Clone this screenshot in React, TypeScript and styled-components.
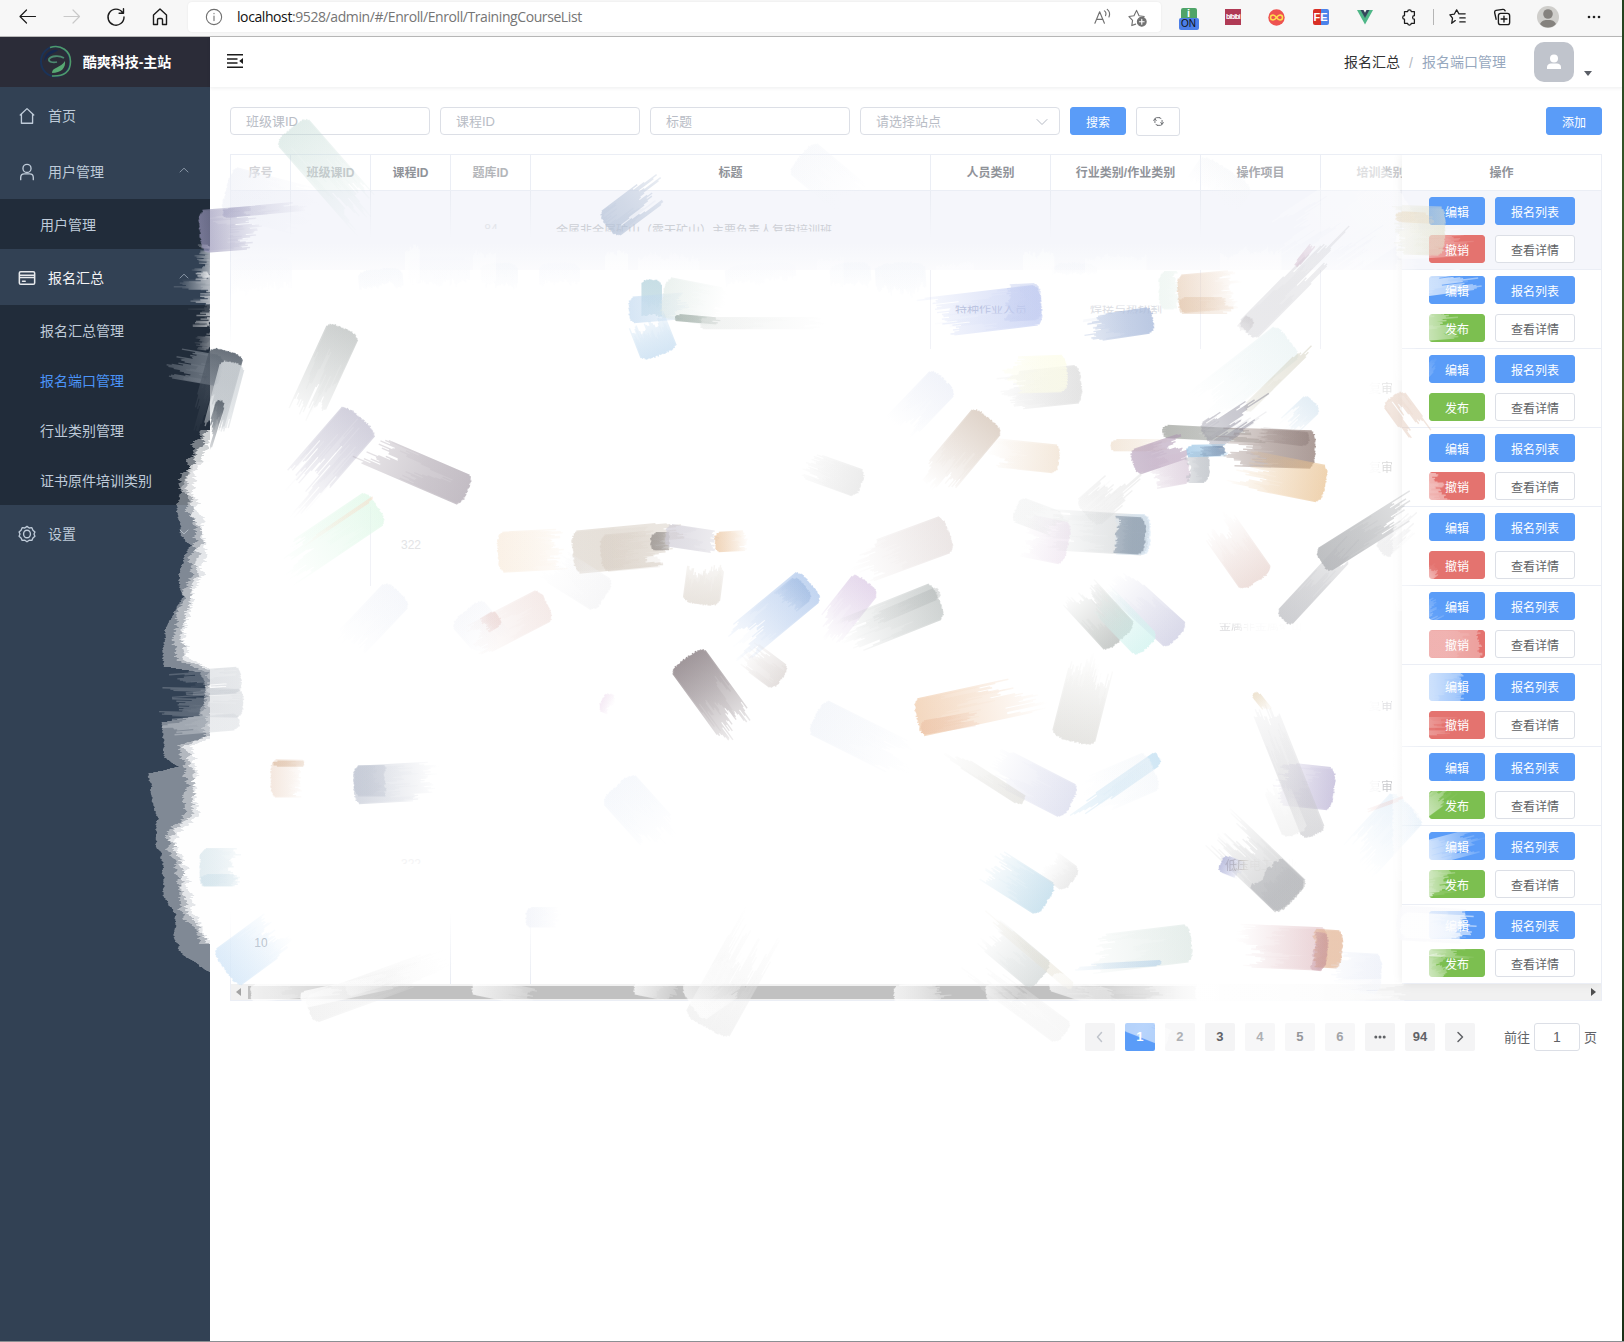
import React from "react";
import styled, { createGlobalStyle, css } from "styled-components";

const GlobalStyle = createGlobalStyle`
  * { box-sizing: border-box; }
  body { margin: 0; background: #fff; overflow: hidden; }
  body, button, input {
    font-family: "Liberation Sans", "Noto Sans CJK SC", sans-serif;
  }
`;

const Window = styled.div`
  width: 1624px;
  height: 1342px;
  display: flex;
  flex-direction: column;
  position: relative;
  overflow: hidden;
  background: #fff;
  border-bottom: 1px solid #8b8f93;
`;

const DesktopEdge = styled.div`
  position: absolute;
  top: 0;
  right: 0;
  width: 2px;
  height: 1342px;
  background: linear-gradient(#24411f, #3b5a2b 15%, #4d5a2a 30%, #14220f 50%, #26401f 70%, #1b3017);
`;

/* ---------- browser bar ---------- */

const BrowserBar = styled.header`
  height: 37px;
  flex: none;
  display: flex;
  align-items: flex-start;
  background: #f7f7f7;
  border-bottom: 1px solid #b9b9b9;
  padding-top: 2px;
`;

const NavButtons = styled.div`
  width: 188px;
  height: 30px;
  display: flex;
  align-items: center;
  padding-left: 18px;
  gap: 24px;
`;

const AddressBar = styled.div`
  width: 973px;
  height: 30px;
  display: flex;
  align-items: center;
  background: #fff;
  border-radius: 4px;
  box-shadow: 0 0 2px rgba(0, 0, 0, 0.08);
  padding: 0 14px 0 17px;
`;

const Url = styled.span`
  flex: 1;
  margin-left: 14px;
  padding-bottom: 1px;
  font: 14px "Open Sans", "Noto Sans", sans-serif;
  letter-spacing: -0.41px;
  color: #757575;
  b { font-weight: 400; color: #111; }
`;

const AddressTools = styled.div`
  display: flex;
  gap: 16px;
  align-items: center;
`;

const Extensions = styled.div`
  height: 30px;
  display: flex;
  align-items: center;
`;

const Slot = styled.div<{ $w: number }>`
  width: ${(p) => p.$w}px;
  height: 30px;
  display: flex;
  align-items: center;
  justify-content: center;
`;

const OnTile = styled.div`
  width: 20px;
  display: flex;
  flex-direction: column;
  align-items: center;
  margin-top: 4px;
`;
const OnTop = styled.div`
  width: 16px;
  height: 10px;
  border-radius: 2px 2px 0 0;
  background: #4fa468;
  color: #fff;
  font: bold 11px/11px "Liberation Sans", sans-serif;
  text-align: center;
`;
const OnLabel = styled.div`
  width: 20px;
  height: 12px;
  border-radius: 2px;
  background: #4b7ee8;
  color: #111;
  font: 10px/12px "Liberation Sans", sans-serif;
  text-align: center;
`;
const RedTile = styled.div`
  width: 16px;
  height: 16px;
  background: #b03a55;
  color: #fff;
  font: bold 7px/15px "Liberation Sans", sans-serif;
  letter-spacing: -0.8px;
  text-align: center;
`;
const FeTile = styled.div`
  width: 16px;
  height: 16px;
  border-radius: 2px;
  background: linear-gradient(90deg, #d92f25 50%, #4c83ea 50%);
  color: #fff;
  font: bold 11px/16px "Liberation Sans", sans-serif;
  text-align: center;
`;
const Divider = styled.div`
  width: 1px;
  height: 16px;
  background: #b5b5b5;
`;

/* ---------- app shell ---------- */

const Shell = styled.div`
  flex: 1;
  display: flex;
  min-height: 0;
`;

const Sidebar = styled.nav`
  width: 210px;
  flex: none;
  background: #324154;
`;

const Brand = styled.div`
  height: 50px;
  display: flex;
  align-items: center;
  justify-content: center;
  gap: 11px;
  padding-bottom: 2px;
  background: #2b2c38;
  color: #fff;
  font-size: 14px;
  font-weight: 700;
`;

const MenuItem = styled.div<{ $open?: boolean }>`
  height: 56px;
  display: flex;
  align-items: center;
  padding: 2px 20px 0 18px;
  font-size: 14px;
  color: ${(p) => (p.$open ? "#f4f4f5" : "#bfcbd9")};
  span { flex: 1; margin-left: 12px; padding-bottom: 3px; }
`;

const MenuArrow = styled.div`
  display: flex;
  padding-bottom: 5px;
`;

const SubMenu = styled.div`
  background: #212c3a;
`;

const SubItem = styled.div<{ $active?: boolean }>`
  height: 50px;
  padding: 2px 0 0 40px;
  line-height: 48px;
  font-size: 14px;
  color: ${(p) => (p.$active ? "#4b94f8" : "#bfcbd9")};
`;

const Main = styled.main`
  flex: 1;
  min-width: 0;
  display: flex;
  flex-direction: column;
`;

const Navbar = styled.div`
  height: 50px;
  flex: none;
  display: flex;
  align-items: center;
  padding: 0 32px 2px 17px;
  box-shadow: 0 1px 4px rgba(0, 21, 41, 0.08);
`;

const Crumbs = styled.div`
  margin-left: auto;
  display: flex;
  align-items: center;
  font-size: 14px;
  line-height: 20px;
  padding-top: 1px;
  color: #97a8be;
  b { font-weight: 400; color: #303133; }
  i { font-style: normal; color: #b4b8c0; width: 22px; text-align: center; padding-top: 2px; }
`;

const Avatar = styled.div`
  width: 40px;
  height: 40px;
  margin: 2px 10px 0 28px;
  border-radius: 10px;
  background: #c0c4cc;
  display: flex;
  align-items: center;
  justify-content: center;
`;

const Caret = styled.div`
  margin-top: 24px;
  border: 4px solid transparent;
  border-top: 5px solid #5a5e66;
  border-bottom: 0;
`;

const Content = styled.section`
  padding: 20px 22px 0 20px;
  display: flex;
  flex-direction: column;
`;

const Filters = styled.div`
  display: flex;
  gap: 10px;
  height: 29px;
  align-items: flex-start;
`;

const Field = styled.div`
  width: 200px;
  height: 28px;
  display: flex;
  align-items: center;
  justify-content: space-between;
  border: 1px solid #dcdfe6;
  border-radius: 4px;
  padding: 1px 11px 0 15px;
  font-size: 13px;
  line-height: 20px;
  color: #b9bdc6;
`;

type Tone = "primary" | "danger" | "success" | "plain";
const tones: Record<Tone, string> = {
  primary: "#5a9cf8",
  danger: "#e4736f",
  success: "#7cbf50",
  plain: "#fff",
};

const Button = styled.button<{ $tone: Tone; $w: number; $h?: number }>`
  width: ${(p) => p.$w}px;
  height: ${(p) => p.$h ?? 28}px;
  flex: none;
  display: flex;
  align-items: center;
  justify-content: center;
  padding: 0;
  border: 1px solid ${(p) => (p.$tone === "plain" ? "#dcdfe6" : tones[p.$tone])};
  border-radius: 3px;
  background: ${(p) => tones[p.$tone]};
  color: ${(p) => (p.$tone === "plain" ? "#606266" : "#fff")};
  font-size: 12px;
`;

const Spacer = styled.div`
  flex: 1;
`;

/* ---------- table ---------- */

const TableFrame = styled.div`
  margin-top: 18px;
  width: 1372px;
  border: 1px solid #ebeef5;
  display: grid;
  grid-template-columns: 1171px 199px;
`;

const Scrolling = styled.div`
  overflow: hidden;
`;

const Fixed = styled.div`
  background: #fff;
  box-shadow: 0 0 10px rgba(0, 0, 0, 0.08);
  clip-path: inset(0 0 -12px -12px);
`;

const columns = "60px 80px 80px 80px 400px 120px 150px 120px 120px";

const HeadRow = styled.div`
  width: 1210px;
  display: grid;
  grid-template-columns: ${columns};
  height: 36px;
  border-bottom: 1px solid #ebeef5;
`;

const HeadCell = styled.div<{ $ink?: string }>`
  display: flex;
  align-items: center;
  justify-content: center;
  padding-bottom: 2px;
  border-right: 1px solid #ebeef5;
  font-size: 12px;
  font-weight: 700;
  color: ${(p) => p.$ink ?? "#909399"};
`;

const BodyRow = styled.div<{ $h: number; $hover?: boolean }>`
  width: 1210px;
  height: ${(p) => p.$h}px;
  display: grid;
  grid-template-columns: ${columns};
  ${(p) =>
    p.$hover &&
    css`
      background: linear-gradient(#f5f6fb 65%, #f8f9fc 85%, #fbfbfd);
    `}
`;

const BodyCell = styled.div<{ $ink?: string; $line?: string; $shift?: number }>`
  display: flex;
  align-items: center;
  justify-content: center;
  padding-right: ${(p) => p.$shift ?? 0}px;
  padding-bottom: 3px;
  font-size: 12px;
  white-space: nowrap;
  color: ${(p) => p.$ink ?? "#e6e7ea"};
  background: ${(p) => p.$line ?? "none"} right / 1px 100% no-repeat;
`;

const CellText = styled.span<{ $top?: number; $bottom?: number; $fade?: boolean; $tail?: boolean }>`
  clip-path: inset(${(p) => p.$top ?? 0}px 0 ${(p) => p.$bottom ?? 0}px 0);
  ${(p) => p.$fade && css`mask-image: linear-gradient(90deg, #000 16%, rgba(0, 0, 0, 0.15) 34%, rgba(0, 0, 0, 0.02));`}
  ${(p) => p.$tail && css`mask-image: linear-gradient(90deg, rgba(0, 0, 0, 0.1) 35%, #000 60%);`}
`;

const ActionHead = styled(HeadCell)`
  height: 36px;
  border-right: 0;
  border-bottom: 1px solid #ebeef5;
`;

const ActionCell = styled.div<{ $h: number; $hover?: boolean }>`
  height: ${(p) => p.$h}px;
  padding-left: 27px;
  display: grid;
  grid-template-columns: 56px 80px;
  gap: 10px;
  align-content: center;
  border-bottom: 1px solid #ebeef5;
  background: ${(p) => (p.$hover ? "#f5f6fb" : "#fff")};
`;

const ScrollTrack = styled.div`
  grid-column: 1 / 3;
  height: 16px;
  display: flex;
  align-items: center;
  padding: 0 5px 0 5px;
  background: #f1f1f1;
`;

const ScrollThumb = styled.div`
  width: 958px;
  height: 13px;
  margin-left: 7px;
  margin-right: auto;
  background: #c1c1c1;
`;

const ArrowTip = styled.div<{ $dir: "left" | "right" }>`
  border: 4px solid transparent;
  ${(p) =>
    p.$dir === "left"
      ? css`border-left: 0; border-right: 5px solid #a3a3a3;`
      : css`border-right: 0; border-left: 5px solid #505050;`}
`;

/* ---------- pagination ---------- */

const Pager = styled.div`
  margin-top: 22px;
  display: flex;
  justify-content: flex-end;
  gap: 10px;
  padding-right: 5px;
  font-size: 13px;
  color: #606266;
`;

const Page = styled.div<{ $on?: boolean; $ink?: string }>`
  width: 30px;
  height: 28px;
  display: flex;
  align-items: center;
  justify-content: center;
  padding-bottom: 1px;
  border-radius: 2px;
  background: ${(p) => (p.$on ? "#5a9cf8" : p.$ink ? "#f7f7f8" : "#f4f4f5")};
  color: ${(p) => (p.$on ? "#fff" : p.$ink ?? "#606266")};
  font-weight: 700;
`;

const Jump = styled.div`
  height: 28px;
  display: flex;
  align-items: center;
  gap: 4px;
  margin-left: 19px;
  line-height: 27px;
`;

const JumpBox = styled.div`
  width: 46px;
  height: 28px;
  border: 1px solid #dcdfe6;
  border-radius: 3px;
  text-align: center;
  font-size: 14px;
`;

/* ---------- brush marks ---------- */

const Canvas = styled.svg`
  position: absolute;
  top: 0;
  left: 0;
  pointer-events: none;
`;

function random(seed: number) {
  let s = (seed * 2654435761) % 4294967296;
  return () => {
    s = (s * 1664525 + 1013904223) % 4294967296;
    return s / 4294967296;
  };
}

/* from x,y / to x,y / width / colour / opacity at start / opacity at end / raggedness of the tail */
type Mark = [number, number, number, number, number, string, number, number, number?];

function bristles(rnd: () => number, width: number, len: number, rag: number) {
  const step = 1.2;
  let d = "";
  let drift = 0;
  for (let t = -width / 2; t < width / 2; t += step) {
    const edge = Math.abs(t) / (width / 2);
    drift = drift * 0.8 + (rnd() - 0.5) * 0.6;
    const s = Math.pow(edge, 5) * 5 + rnd() * 1.8;
    const e = Math.max(s + 2, len * (1 - rag * (0.3 + drift + rnd() * 0.45)));
    d += `M${s.toFixed(1)} ${t.toFixed(1)}H${e.toFixed(1)}v${step + 0.2}H${s.toFixed(1)}z`;
  }
  return d;
}

function BrushMark({ mark, index }: { mark: Mark; index: number }) {
  const [x1, y1, x2, y2, width, color, a, b, rag = 0.3] = mark;
  const len = Math.hypot(x2 - x1, y2 - y1);
  const angle = (Math.atan2(y2 - y1, x2 - x1) * 180) / Math.PI;
  const rnd = random(index + 7);
  const id = `brush${index}`;
  return (
    <g transform={`translate(${x1} ${y1}) rotate(${angle.toFixed(1)})`}>
      <linearGradient id={id} gradientUnits="userSpaceOnUse" x1="0" y1="0" x2={len} y2="0">
        <stop offset="0" stopColor={color} stopOpacity={a} />
        <stop offset="0.4" stopColor={color} stopOpacity={a * 0.6 + b * 0.4} />
        <stop offset="1" stopColor={color} stopOpacity={b * 0.8} />
      </linearGradient>
      <path d={bristles(rnd, width, len, rag)} fill={`url(#${id})`} fillOpacity="0.8" />
      <path d={bristles(rnd, width * 0.94, len * 0.8, rag + 0.25)} fill={`url(#${id})`} fillOpacity="0.2" />
    </g>
  );
}

const W = "#ffffff";
const marks: Mark[] = [
  // header and first row
  [290, 128, 375, 225, 40, "#bfd8d2", 0.5, 0, 0.4],
  [225, 190, 320, 215, 50, "#eef0f7", 0.7, 0],
  [800, 155, 860, 205, 40, "#f3f5f9", 0.6, 0],
  [1230, 170, 1210, 200, 60, "#f3f5f8", 0.5, 0],
  [606, 226, 662, 184, 30, "#b6c3d8", 0.85, 0.5, 0.7],
  [1400, 190, 1290, 262, 90, W, 0.5, 0.3, 0.5],
  [199, 231, 262, 226, 42, "#9592b6", 0.85, 0.1, 0.4],
  [222, 213, 310, 205, 9, "#a7a5c4", 0.6, 0, 0.5],
  [262, 256, 262, 292, 60, "#f7f8fc", 0.8, 0.2],
  [380, 268, 382, 290, 44, "#f5f7fb", 0.8, 0.4],
  [440, 255, 440, 288, 60, "#f7f8fc", 0.8, 0.3],
  [500, 262, 500, 290, 36, "#f5f7fb", 0.8, 0.3],
  [560, 262, 560, 288, 40, "#f7f8fc", 0.8, 0.2],
  [760, 262, 762, 284, 70, "#f8f9fc", 0.8, 0.3],
  [850, 262, 852, 288, 40, "#f5f7fb", 0.8, 0.3],
  [900, 262, 902, 296, 50, "#f5f7fb", 0.9, 0.3],
  [1075, 262, 1075, 276, 44, "#f5f7fb", 0.8, 0.3],
  [412, 285, 412, 246, 14, W, 0.9, 0.5, 0.2],
  [484, 285, 484, 250, 22, W, 0.8, 0.4, 0.2],
  [616, 288, 616, 250, 22, W, 0.9, 0.6, 0.2],
  [668, 290, 668, 252, 60, W, 0.8, 0.3, 0.2],
  [830, 290, 830, 256, 26, W, 0.7, 0.3, 0.2],
  [954, 290, 954, 262, 36, W, 0.8, 0.4, 0.2],
  [1038, 285, 1038, 250, 30, W, 0.95, 0.6, 0.2],
  [1115, 285, 1115, 254, 60, W, 0.8, 0.4, 0.2],
  [1250, 285, 1250, 248, 60, W, 0.9, 0.4, 0.2],
  // left column
  [345, 328, 298, 430, 34, "#b3b8b7", 0.75, 0, 0.4],
  [362, 418, 282, 510, 44, "#9c98b4", 0.5, 0, 0.6],
  [468, 492, 366, 448, 32, "#9e94a0", 0.7, 0.4, 0.3],
  [378, 506, 280, 572, 38, "#e0f8e8", 0.9, 0, 0.4],
  [374, 498, 300, 548, 3, "#f8dcc8", 0.6, 0],
  [400, 592, 345, 650, 34, "#f3f5fa", 0.9, 0],
  [465, 610, 500, 650, 40, "#f5f6fa", 0.8, 0],
  [548, 604, 474, 642, 34, "#ecd9d5", 0.6, 0.1],
  [500, 617, 483, 627, 16, "#e8cdca", 0.6, 0.4],
  [270, 778, 308, 778, 38, "#f0dfd3", 0.85, 0],
  [272, 763, 305, 763, 5, "#dfc2aa", 0.9, 0.6, 0.1],
  [353, 785, 440, 780, 38, "#bcc2d0", 0.7, 0],
  [353, 780, 386, 780, 30, "#b5bccb", 0.5, 0.5, 0.1],
  [199, 867, 242, 867, 38, "#d8e6ec", 0.85, 0.3],
  [200, 880, 238, 880, 12, "#cbdfe9", 0.6, 0.4],
  [224, 970, 284, 926, 44, "#cfe4f7", 0.85, 0],
  [525, 917, 562, 917, 20, "#f1f3f9", 0.9, 0],
  [308, 1010, 440, 962, 28, "#eaeaea", 0.65, 0.05],
  [345, 990, 430, 965, 14, "#f0f0f0", 0.5, 0],
  // upper middle
  [652, 279, 652, 318, 20, "#b3d2dc", 0.85, 0.7, 0.1],
  [628, 310, 690, 305, 26, "#c0d8ef", 0.75, 0.2],
  [662, 296, 725, 308, 40, "#dfe9e5", 0.7, 0],
  [674, 317, 720, 321, 7, "#8f9f97", 0.7, 0.5],
  [660, 356, 645, 318, 38, "#bdd8ef", 0.75, 0.3],
  [700, 323, 830, 323, 12, "#e3e6e4", 0.6, 0],
  [1042, 305, 914, 320, 40, "#c0cbf2", 0.85, 0.1, 0.4],
  [1042, 302, 1003, 304, 36, "#c0caef", 0.6, 0.6, 0.2],
  [1154, 320, 1086, 330, 26, "#a6b8da", 0.9, 0.5],
  [1158, 290, 1182, 290, 38, "#edf5f1", 0.9, 0.7],
  [1177, 294, 1244, 288, 38, "#e6cbb3", 0.7, 0],
  [1178, 305, 1234, 305, 16, "#dfc0a4", 0.5, 0.3],
  [1245, 332, 1336, 240, 24, "#cbcbd1", 0.45, 0.5, 0.7],
  [1295, 266, 1316, 240, 5, "#d5bfd0", 0.6, 0.5],
  [1252, 318, 1240, 332, 12, "#c0bcc0", 0.5, 0.2],
  [1082, 384, 1006, 392, 38, "#d6d6d6", 0.75, 0.2],
  [1068, 374, 1005, 376, 36, "#fcfce9", 0.95, 0.5],
  [946, 380, 898, 430, 34, "#edf0f8", 0.9, 0],
  [990, 418, 930, 490, 38, "#cfbdae", 0.75, 0],
  [1060, 460, 985, 452, 28, "#eeddca", 0.75, 0],
  [862, 485, 792, 460, 28, "#e0e0e0", 0.7, 0, 0.4],
  // right middle
  [1290, 340, 1200, 410, 40, "#e4f0f1", 0.65, 0],
  [1245, 410, 1318, 338, 9, "#c8c4ae", 0.2, 0.7, 0.5],
  [1315, 402, 1275, 440, 22, "#cfe1ee", 0.65, 0, 0.6],
  [1162, 431, 1260, 436, 13, "#a1a49f", 0.9, 0.5],
  [1316, 450, 1218, 447, 38, "#8e7872", 0.85, 0.4],
  [1310, 440, 1250, 433, 14, "#705c5a", 0.3, 0.1],
  [1326, 485, 1225, 465, 38, "#e8c08e", 0.8, 0, 0.35],
  [1205, 438, 1266, 398, 30, "#8c8b9b", 0.4, 0.8, 0.8],
  [1110, 445, 1175, 445, 12, "#f0e2d2", 0.9, 0.2],
  [1132, 463, 1188, 444, 26, "#a98fae", 0.6, 0.8],
  [1190, 468, 1150, 475, 30, "#d2c0d2", 0.7, 0.3],
  [1210, 468, 1186, 468, 30, "#b3b8bf", 0.8, 0.6],
  [1186, 451, 1230, 450, 12, "#a0c8e6", 0.9, 0.6],
  [1226, 451, 1200, 452, 9, "#6d86a6", 0.8, 0.4],
  [1085, 515, 1130, 476, 34, "#d9d9d9", 0.2, 0.6, 0.9],
  [1392, 396, 1420, 434, 26, "#e1c5b4", 0.5, 0.7, 0.8],
  [1149, 536, 1048, 530, 40, "#c8ccce", 0.75, 0.1],
  [1151, 535, 1115, 535, 40, "#cfe2f3", 0.7, 0.3, 0.1],
  [1146, 537, 1113, 535, 36, "#8f9eae", 0.95, 0.95, 0.15],
  [1069, 545, 1020, 535, 42, "#e8dbea", 0.6, 0],
  [1015, 508, 1060, 525, 26, "#e2e4e4", 0.3, 0.4],
  [1258, 582, 1218, 525, 38, "#e5cfc9", 0.75, 0.05],
  [1320, 562, 1428, 494, 26, "#aeb0b3", 0.95, 0.45, 0.4],
  [1380, 552, 1424, 512, 20, "#cfcfd2", 0.3, 0.4, 0.8],
  [1282, 620, 1362, 534, 20, "#b4b5ba", 0.75, 0.3, 0.4],
  [1122, 640, 1074, 588, 40, "#b0b5b2", 0.8, 0],
  [1178, 638, 1112, 578, 32, "#c9c9e0", 0.8, 0, 0.3],
  [1148, 648, 1098, 596, 30, "#d2f3ef", 0.95, 0],
  [1072, 742, 1094, 656, 44, "#dbdad6", 0.8, 0.05],
  // centre
  [497, 552, 572, 548, 40, "#f8ebdc", 0.8, 0.2],
  [572, 552, 678, 542, 42, "#d3c9bd", 0.6, 0.7],
  [600, 553, 668, 547, 36, "#cfc3b7", 0.4, 0.2],
  [605, 598, 545, 560, 36, "#f0f0f2", 0.6, 0],
  [650, 541, 670, 541, 18, "#8f8986", 0.8, 0.7, 0.1],
  [665, 534, 724, 543, 22, "#cfccd6", 0.8, 0.5],
  [714, 542, 750, 540, 20, "#ecc9a6", 0.95, 0],
  [700, 605, 706, 560, 36, "#dfd8d0", 0.8, 0.3],
  [950, 533, 850, 570, 38, "#e3dbda", 0.8, 0],
  [812, 584, 725, 656, 38, "#b4cbed", 0.95, 0],
  [806, 586, 784, 604, 28, "#88a9d8", 0.45, 0.15, 0.3],
  [868, 582, 822, 640, 32, "#dac8e4", 0.8, 0],
  [940, 600, 840, 640, 38, "#b6bcbb", 0.75, 0],
  [940, 592, 870, 622, 12, "#a8adad", 0.4, 0.1],
  [686, 657, 742, 734, 40, "#83777c", 0.9, 0.2, 0.35],
  [782, 680, 742, 650, 28, "#cdc4c1", 0.6, 0, 0.7],
  [815, 715, 915, 765, 38, "#f1f4f9", 0.85, 0],
  [916, 718, 1045, 690, 38, "#efc9a8", 0.85, 0, 0.5],
  [920, 728, 990, 716, 14, "#e9b99c", 0.5, 0.2],
  [1072, 804, 990, 762, 36, "#d8daec", 0.85, 0],
  [1024, 802, 940, 748, 12, "#dcdbd6", 0.7, 0],
  [1160, 757, 1062, 825, 14, "#bcdcf0", 0.8, 0.25, 0.5],
  [1155, 770, 1085, 800, 40, "#f1f5f9", 0.6, 0],
  [601, 700, 614, 706, 20, "#eedcee", 0.7, 0],
  [616, 785, 670, 845, 42, "#f3f6fb", 0.9, 0],
  // lower right
  [1335, 790, 1280, 784, 42, "#b8b0d3", 0.8, 0.2],
  [1314, 836, 1262, 705, 24, "#c6c6ca", 0.7, 0.15, 0.2],
  [1296, 835, 1275, 785, 26, "#eeeeee", 0.8, 0.2],
  [1254, 692, 1270, 712, 8, "#e6d6bb", 0.8, 0.1],
  [1294, 900, 1212, 822, 44, "#b9babc", 0.75, 0, 0.4],
  [1293, 900, 1264, 872, 42, "#a9abb0", 0.5, 0.7, 0.1],
  [1220, 862, 1245, 872, 18, "#a8acd6", 0.85, 0],
  [1410, 805, 1355, 865, 44, "#ddebf7", 0.65, 0, 0.4],
  [1404, 798, 1365, 812, 3, "#edcfcd", 0.6, 0.2],
  [1048, 902, 985, 862, 36, "#a8cfe3", 0.65, 0.05],
  [1073, 882, 1046, 862, 28, "#dadada", 0.6, 0],
  [1192, 943, 1085, 956, 38, "#d9e5e1", 0.75, 0.1],
  [1162, 963, 1070, 968, 6, "#b9d4ea", 0.8, 0.1],
  [1328, 950, 1235, 946, 42, "#d6a8af", 0.6, 0],
  [1343, 950, 1312, 948, 38, "#e0ad8a", 0.75, 0.75, 0.2],
  [1328, 953, 1312, 951, 38, "#bd8a98", 0.5, 0.5, 0.2],
  [1382, 975, 1330, 972, 40, "#e9edf7", 0.75, 0.3],
  [1042, 978, 985, 930, 34, "#ccd2d2", 0.75, 0],
  [1072, 988, 975, 905, 9, "#e5e0d2", 0.6, 0.1, 0.5],
  [705, 1028, 768, 915, 50, "#ececec", 0.7, 0, 0.5],
  [1065, 1035, 950, 950, 26, "#eeeeee", 0.5, 0.1, 0.6],
  // white scrubs across the scrollbar
  [250, 993, 345, 985, 18, W, 0.9, 0.4],
  [300, 1000, 400, 978, 16, W, 1, 0.3],
  [472, 985, 545, 1000, 18, W, 0.9, 0.2],
  [634, 985, 680, 994, 18, W, 0.9, 0.2],
  [690, 1005, 740, 970, 40, W, 0.8, 0.2],
  [893, 994, 955, 990, 18, W, 0.9, 0.3],
  [985, 992, 1025, 992, 18, W, 0.8, 0],
  [1050, 980, 1120, 1003, 20, W, 0.8, 0.3],
  [1216, 993, 1060, 993, 22, W, 1, 0.1],
  [1210, 993, 1140, 993, 22, W, 1, 0.3],
  [1195, 994, 1420, 990, 24, W, 1, 0.6, 0.2],
  [1195, 994, 1390, 992, 24, W, 1, 0.5, 0.2],
  // scrubs over the action column
  [1392, 560, 1424, 560, 100, W, 0.6, 0],
  [1392, 800, 1424, 800, 160, W, 0.7, 0],
  [1392, 320, 1424, 320, 120, W, 0.6, 0],
  [1395, 245, 1478, 240, 28, W, 0.7, 0.1, 0.6],
  [1446, 232, 1390, 230, 48, "#e2e2cd", 0.7, 0.2],
  [1395, 216, 1436, 218, 10, "#e8d8bd", 0.5, 0.5],
  [1410, 285, 1478, 276, 24, W, 0.9, 0.6, 0.7],
  [1415, 328, 1468, 324, 26, W, 0.9, 0.2, 0.6],
  [1420, 376, 1438, 356, 14, W, 0.3, 0, 0.6],
  [1415, 487, 1446, 487, 28, W, 0.6, 0.6, 0.4],
  [1425, 576, 1440, 564, 14, W, 0.6, 0.1, 0.6],
  [1420, 615, 1450, 600, 22, W, 0.4, 0, 0.8],
  [1422, 644, 1483, 644, 28, W, 0.5, 0.5, 0.1],
  [1412, 690, 1465, 688, 38, W, 0.9, 0.6, 0.12],
  [1415, 726, 1464, 726, 18, W, 0.4, 0, 0.8],
  [1415, 815, 1452, 788, 18, W, 0.8, 0.2, 0.6],
  [1418, 855, 1482, 838, 24, W, 1, 0.1, 0.6],
  [1418, 884, 1458, 880, 26, W, 0.9, 0.3, 0.6],
  [1396, 922, 1466, 926, 34, "#fafafc", 1, 1, 0.1],
  [1400, 924, 1476, 928, 24, W, 0.9, 0.8, 0.3],
  [1420, 948, 1478, 952, 14, W, 0.9, 0, 0.6],
  [1422, 970, 1448, 962, 24, W, 0.8, 0.3, 0.5],
  // pager
  [1124, 1021, 1170, 1039, 18, W, 0.6, 0.7, 0.05],
];

/* x of the painted edge over the menu, sampled down the page */
const washEdge: [number, number][] = [
  [462, 196], [480, 185], [508, 176], [534, 181], [545, 190], [562, 183], [580, 179], [595, 184], [626, 167], [651, 161],
  [666, 166], [672, 200], [690, 206], [715, 200], [722, 161], [757, 165], [766, 178], [773, 149], [807, 153], [816, 157],
  [848, 157], [855, 161], [883, 165], [896, 163], [914, 176], [941, 174], [955, 184], [966, 200], [972, 210],
];
const whiteEdge: [number, number][] = [
  [430, 209], [455, 198], [478, 187], [501, 192], [541, 203], [573, 197], [605, 188], [640, 180], [660, 184], [672, 214], [735, 212],
  [745, 184], [760, 190], [780, 194], [812, 194], [835, 172], [850, 174], [873, 183], [909, 188], [925, 198], [944, 210],
];

function edgeAt(points: [number, number][], y: number) {
  for (let i = 1; i < points.length; i++) {
    const [y0, x0] = points[i - 1];
    const [y1, x1] = points[i];
    if (y <= y1) return x0 + ((x1 - x0) * (y - y0)) / (y1 - y0);
  }
  return points[points.length - 1][1];
}

function edgePath(points: [number, number][], jitter: number, right: number, shift = 0) {
  const rnd = random(points.length * 31 + shift + 40);
  let d = "";
  let drift = 0;
  for (let y = points[0][0]; y < points[points.length - 1][0]; y += 1) {
    drift = drift * 0.75 + (rnd() - 0.5) * jitter * 0.7;
    const x = edgeAt(points, y) + shift + drift;
    if (x < right) d += `M${x.toFixed(1)} ${y}H${right}v1H${x.toFixed(1)}z`;
  }
  return d;
}

function Brushwork() {
  return (
    <Canvas width={1622} height={1100} viewBox="0 0 1622 1100">
      <clipPath id="menuArea"><path d="M0 0H210V1100H0z" /></clipPath>
      <linearGradient id="ruleFade" x1="0" y1="0" x2="0" y2="1">
        <stop offset="0" stopColor="#fff" stopOpacity="0" />
        <stop offset="0.08" stopColor="#fff" />
        <stop offset="0.9" stopColor="#fff" />
        <stop offset="1" stopColor="#fff" stopOpacity="0.3" />
      </linearGradient>
      <path d="M228 290H233V980H228z" fill="url(#ruleFade)" />
      <g clipPath="url(#menuArea)">
        <BrushMark index={900} mark={[213, 263, 190, 262, 34, W, 0.8, 0, 1]} />
        <BrushMark index={901} mark={[213, 300, 184, 300, 54, W, 0.8, 0.2, 1.1]} />
        <BrushMark index={902} mark={[213, 338, 192, 336, 26, W, 0.5, 0, 1.1]} />
      </g>
      <BrushMark index={903} mark={[222, 372, 164, 362, 30, "#a9b1ba", 0.7, 0.4, 0.7]} />
      <BrushMark index={904} mark={[228, 350, 206, 430, 34, "#4b5561", 1, 0.2, 0.4]} />
      <BrushMark index={905} mark={[234, 362, 216, 430, 24, "#d3d8dc", 1, 0.7, 0.3]} />
      <BrushMark index={906} mark={[222, 400, 205, 455, 9, "#39434f", 0.8, 0.2, 0.7]} />
      <path d={edgePath(washEdge, 3, 210)} fill="#ffffff" fillOpacity="0.38" />
      <path d={edgePath(whiteEdge, 7, 210, -7)} fill="#ffffff" fillOpacity="0.4" />
      <path d={edgePath(whiteEdge, 7, 210, -1)} fill="#ffffff" fillOpacity="0.65" />
      <path d={edgePath(whiteEdge, 8, 210, 4)} fill="#ffffff" fillOpacity="0.95" />
      <BrushMark index={907} mark={[242, 680, 158, 686, 26, "#a9b0ba", 0.3, 0.5, 0.7]} />
      <BrushMark index={908} mark={[244, 704, 162, 702, 28, "#b4bac2", 0.35, 0.5, 0.6]} />
      <BrushMark index={909} mark={[240, 722, 168, 728, 16, "#d3d7dc", 0.5, 0.6, 0.4]} />
      {marks.map((m, i) => (
        <BrushMark key={i} mark={m} index={i} />
      ))}
    </Canvas>
  );
}

/* ---------- icons ---------- */

type LineProps = { w?: number; c?: string; sw?: number; vb?: string; children: React.ReactNode };

const Glyph = styled.svg`
  flex: none;
`;

const Line = ({ w = 18, c = "#1b1b1b", sw = 1.2, vb = "0 0 20 20", children }: LineProps) => (
  <Glyph width={w} height={w} viewBox={vb} fill="none" stroke={c} strokeWidth={sw} strokeLinecap="round" strokeLinejoin="round">
    {children}
  </Glyph>
);

const Chevron = ({ d, c, w = 12, sw = 1.2 }: { d: string; c: string; w?: number; sw?: number }) => (
  <Line w={w} c={c} sw={sw} vb="0 0 12 12">
    <path d={d} />
  </Line>
);

const Logo = () => (
  <svg width="33" height="33" viewBox="0 0 33 33" fill="none">
    <ellipse cx="16.500" cy="16.500" rx="14.500" ry="15" stroke="#1b3358" strokeWidth="2" />
    <path d="M11 2.500C22-1 31.500 6 31.500 16.500S25 31.500 13 31" stroke="#4f9a6b" strokeWidth="1.600" />
    <path d="M5 16C6 8 12 4 19 5c-2 3-9 3-12 9" fill="#152850" />
    <path d="M25 13c-5-3-13-2-15 1-1 3 4 4 8 3" stroke="#4c8a70" strokeWidth="1.800" />
    <path d="M26 16c1 7-4 12-13 12 0-6 9-5 13-12z" fill="#57a873" />
  </svg>
);

const rows: { h: number; status: "撤销" | "发布" }[] = [
  { h: 79, status: "撤销" },
  { h: 79, status: "发布" },
  { h: 79, status: "发布" },
  { h: 79, status: "撤销" },
  { h: 79, status: "撤销" },
  { h: 79, status: "撤销" },
  { h: 82, status: "撤销" },
  { h: 79, status: "发布" },
  { h: 79, status: "发布" },
  { h: 79, status: "发布" },
];

const headers: [string, string?][] = [
  ["序号", "#d3d4d8"],
  ["班级课ID", "#c5c7cb"],
  ["课程ID"],
  ["题库ID", "#b4b6ba"],
  ["标题"],
  ["人员类别"],
  ["行业类别/作业类别"],
  ["操作项目", "#a9abb0"],
  ["培训类别", "#c9cacd"],
];

const fadeDown = "linear-gradient(#e9ecf3, transparent 60%)";
const fadeUp = "linear-gradient(transparent 10%, #e9ecf3)";
const hair = "linear-gradient(#f1f2f7, #f1f2f7)";

type CellInfo = {
  text?: string;
  ink?: string;
  line?: string;
  top?: number;
  bottom?: number;
  shift?: number;
  fade?: boolean;
  tail?: boolean;
};

const remnants: Record<string, CellInfo> = {
  "0-3": { text: "84", ink: "#e3e5ea", bottom: 7 },
  "0-4": { text: "金属非金属矿山（露天矿山）主要负责人复审培训班", ink: "#cdd0d6", bottom: 6, shift: 74 },
  "1-5": { text: "特种作业人员", ink: "#b9c0d6", top: 6, bottom: 3 },
  "1-6": { text: "焊接与热切割", ink: "#dcdee4", top: 6, bottom: 3 },
  "2-8": { text: "复审", ink: "#e6e6e6", top: 3, tail: true },
  "3-8": { text: "复审", ink: "#dadada", tail: true },
  "4-2": { text: "322", ink: "#e3e4e6" },
  "5-7": { text: "金属非金属矿山", ink: "#dcdcde", fade: true, top: 8 },
  "6-8": { text: "复审", ink: "#e2e2e5", top: 5, tail: true },
  "7-8": { text: "复审", ink: "#c9cacd", tail: true },
  "8-2": { text: "322", ink: "#f4f4f5", bottom: 7 },
  "8-7": { text: "低压电工作业", ink: "#bdb6ae", fade: true },
  "9-0": { text: "10", ink: "#b4b9c1" },
};

function cellFor(row: number, col: number): CellInfo {
  const info: CellInfo = { ...(remnants[`${row}-${col}`] ?? {}) };
  if (row === 0) info.line = fadeDown;
  if (row === 9 && (col === 2 || col === 3)) info.line = fadeUp;
  if (row === 1 && (col === 4 || col === 7 || col === 6)) info.line = hair;
  if (row === 4 && col === 1) info.line = hair;
  return info;
}

export default function App() {
  return (
    <>
      <GlobalStyle />
      <Window>
        <BrowserBar>
          <NavButtons>
            <Line w={20}><path d="M17.500 9.500H2M8.500 3L2 9.500 8.500 16" /></Line>
            <Line w={20} c="#c9c9c9"><path d="M2 9.500h15.500M11 3l6.500 6.500L11 16" /></Line>
            <Line w={20} sw={1.4}><path d="M16.500 5.500A8 8 0 1 0 18 10M17.500 1.800v4.400h-4.400" /></Line>
            <Line w={20} sw={1.4}><path d="M3.500 8L10 2l6.500 6v9.500h-4v-4.700a1.300 1.300 0 0 0-1.300-1.300H8.800a1.300 1.300 0 0 0-1.300 1.300v4.700h-4z" /></Line>
          </NavButtons>
          <AddressBar>
            <Line w={18} c="#6f6f6f"><circle cx="10" cy="10" r="8.500" /><path d="M10 9v5M10 6v.3" /></Line>
            <Url><b>localhost</b>:9528/admin/#/Enroll/Enroll/TrainingCourseList</Url>
            <AddressTools>
              <Line w={19} c="#707070"><path d="M2 16L7 4l5 12M4 12h6.500M12 3c1.500 1 2 3 1.200 5M15 1.500c2.500 2 3 5 1.800 8" /></Line>
              <Line w={19} c="#707070">
                <path d="M8 17l-4 1.500.8-5.500L1 9l5.300-.9L9 2.500l2.600 5.600L17 9" />
                <circle cx="14.500" cy="14.500" r="4.600" fill="#707070" />
                <path d="M14.500 12v5M12 14.500h5" stroke="#fff" />
              </Line>
            </AddressTools>
          </AddressBar>
          <Extensions>
            <Slot $w={55}><OnTile><OnTop>i</OnTop><OnLabel>ON</OnLabel></OnTile></Slot>
            <Slot $w={34}><RedTile>bibibi</RedTile></Slot>
            <Slot $w={53}>
              <svg width="17" height="17" viewBox="0 0 17 17">
                <circle cx="8.500" cy="8.500" r="8.200" fill="#ee5350" />
                <path d="M8.500 8.500C7 6.500 6 6 5 6a2.500 2.500 0 0 0 0 5c1 0 2-.5 3.500-2.500S11 6 12 6a2.500 2.500 0 0 1 0 5c-1 0-2-.5-3.500-2.500z" fill="none" stroke="#ffe14d" strokeWidth="1.500" />
              </svg>
            </Slot>
            <Slot $w={35}><FeTile>FE</FeTile></Slot>
            <Slot $w={53}>
              <svg width="16" height="15" viewBox="0 0 16 15">
                <path d="M0 0h4l4 7 4-7h4L8 14.500z" fill="#4fb788" />
                <path d="M3.500 0h3L8 2.800 9.500 0h3L8 8z" fill="#33475b" />
              </svg>
            </Slot>
            <Slot $w={35}>
              <Line w={18} sw={1.4}><path d="M6 4h2.500a2 2 0 0 1 4 0H16v4.500a2 2 0 0 0 0 4V17h-3.500a2 2 0 0 1-4 0H5v-4.500a2 2 0 0 1 0-4V4z" /></Line>
            </Slot>
            <Slot $w={14}><Divider /></Slot>
            <Slot $w={35}>
              <Line w={18} sw={1.4}><path d="M7 14l-4 3 .9-5.800L1 7.500l5-.8L8.500 2 11 6.500h7M12 11h6M12 15.500h6" /></Line>
            </Slot>
            <Slot $w={53}>
              <Line w={18} sw={1.5}><rect x="6" y="6" width="12.500" height="12.500" rx="2.500" /><path d="M12.200 9v6.500M9 12.200h6.500M3.500 12.500L1.800 5A2 2 0 0 1 3.300 2.700L11 1.500c1.200-.2 2 .5 2.500 1.700" /></Line>
            </Slot>
            <Slot $w={40}>
              <svg width="22" height="22" viewBox="0 0 22 22">
                <circle cx="11" cy="11" r="11" fill="#cfcecb" />
                <circle cx="11" cy="8" r="4.800" fill="#85827e" />
                <path d="M3 18c2-4 5-4 8-4s6 0 8 4c-4 4.800-12 4.800-16 0z" fill="#85827e" />
              </svg>
            </Slot>
            <Slot $w={51}>
              <svg width="14" height="4" viewBox="0 0 14 4" fill="#222"><circle cx="2" cy="2" r="1.300" /><circle cx="7" cy="2" r="1.300" /><circle cx="12" cy="2" r="1.300" /></svg>
            </Slot>
          </Extensions>
        </BrowserBar>

        <Shell>
          <Sidebar>
            <Brand><Logo />酷爽科技-主站</Brand>
            <MenuItem>
              <Line c="#bfcbd9" sw={1.5}><path d="M2.500 9L10 1.800 17.500 9M3.800 8v10h12.400V8" /></Line>
              <span>首页</span>
            </MenuItem>
            <MenuItem>
              <Line c="#bfcbd9" sw={1.5}><circle cx="10" cy="6" r="4.500" /><path d="M3 18.500v-2.500c0-2.500 1.500-4 4-4h6c2.500 0 4 1.500 4 4v2.500" /></Line>
              <span>用户管理</span>
              <MenuArrow><Chevron d="M2 8L6 4.200 10 8" c="#8794a4" sw={1} /></MenuArrow>
            </MenuItem>
            <SubMenu><SubItem>用户管理</SubItem></SubMenu>
            <MenuItem $open>
              <Line c="#e8eaed" sw={1.7}><rect x="1.500" y="3" width="17" height="14" rx="1.500" /><path d="M2 7h16M2 9.500h16M5 13.500h3" /></Line>
              <span>报名汇总</span>
              <MenuArrow><Chevron d="M2 8L6 4.200 10 8" c="#8794a4" sw={1} /></MenuArrow>
            </MenuItem>
            <SubMenu>
              <SubItem>报名汇总管理</SubItem>
              <SubItem $active>报名端口管理</SubItem>
              <SubItem>行业类别管理</SubItem>
              <SubItem>证书原件培训类别</SubItem>
            </SubMenu>
            <MenuItem>
              <Line c="#bfcbd9" sw={1.5}>
                <path d="M10 1.500l2.400 1.800 3-.3 1.200 2.800 2.200 2-1 2.200 1 2.400-2.200 2-1.200 2.700-3-.2L10 18.600l-2.400-1.700-3 .2-1.200-2.700-2.200-2 1-2.400-1-2.200 2.200-2L4.600 3l3 .3z" />
                <ellipse cx="10" cy="10" rx="3.800" ry="4.200" />
              </Line>
              <span>设置</span>
              <MenuArrow><Chevron d="M2 4L6 7.800 10 4" c="#8794a4" sw={1} /></MenuArrow>
            </MenuItem>
          </Sidebar>

          <Main>
            <Navbar>
              <svg width="17" height="16" viewBox="0 0 17 16" fill="#1c1c1c">
                <path d="M0 1h16v1.600H0zM0 5.200h10.500v1.500H0zM0 9.300h10.500v1.500H0zM0 13.400h16V15H0zM16 5v6l-3.800-3z" />
              </svg>
              <Crumbs><b>报名汇总</b><i>/</i>报名端口管理</Crumbs>
              <Avatar>
                <svg width="14" height="16" viewBox="0 0 14 16" fill="#fff"><circle cx="7" cy="4.500" r="4" /><path d="M0 15v-2c0-2 2-3.500 4-3.500h6c2 0 4 1.500 4 3.500v2z" /></svg>
              </Avatar>
              <Caret />
            </Navbar>

            <Content>
              <Filters>
                <Field>班级课ID</Field>
                <Field>课程ID</Field>
                <Field>标题</Field>
                <Field>请选择站点<Chevron d="M1 3.500L6 8.500l5-5" c="#b4b9c3" sw={1} /></Field>
                <Button $tone="primary" $w={56}>搜索</Button>
                <Button $tone="plain" $w={44} $h={29}>
                  <Line w={11} c="#606266" sw={1.6}><path d="M3.500 12V6a3 3 0 0 1 3-3h5M16.500 8v6a3 3 0 0 1-3 3h-5M1 8l2.500-3L6 8M19 12l-2.500 3-2.500-3M11.500 3l3 1.500M8.500 17l-3-1.500" /></Line>
                </Button>
                <Spacer />
                <Button $tone="primary" $w={56}>添加</Button>
              </Filters>

              <TableFrame>
                <Scrolling>
                  <HeadRow>
                    {headers.map(([label, ink]) => (
                      <HeadCell key={label} $ink={ink}>{label}</HeadCell>
                    ))}
                  </HeadRow>
                  {rows.map((row, r) => (
                    <BodyRow key={r} $h={row.h} $hover={r === 0}>
                      {headers.map((_, c) => {
                        const cell = cellFor(r, c);
                        return (
                          <BodyCell key={c} $ink={cell.ink} $line={cell.line} $shift={cell.shift}>
                            {cell.text && (
                              <CellText $top={cell.top} $bottom={cell.bottom} $fade={cell.fade} $tail={cell.tail}>
                                {cell.text}
                              </CellText>
                            )}
                          </BodyCell>
                        );
                      })}
                    </BodyRow>
                  ))}
                </Scrolling>
                <Fixed>
                  <ActionHead>操作</ActionHead>
                  {rows.map((row, r) => (
                    <ActionCell key={r} $h={row.h} $hover={r === 0}>
                      <Button $tone="primary" $w={56}>编辑</Button>
                      <Button $tone="primary" $w={80}>报名列表</Button>
                      <Button $tone={row.status === "撤销" ? "danger" : "success"} $w={56}>{row.status}</Button>
                      <Button $tone="plain" $w={80}>查看详情</Button>
                    </ActionCell>
                  ))}
                </Fixed>
                <ScrollTrack>
                  <ArrowTip $dir="left" />
                  <ScrollThumb />
                  <ArrowTip $dir="right" />
                </ScrollTrack>
              </TableFrame>

              <Pager>
                <Page><Chevron d="M7.500 1.500L3.500 6l4 4.500" c="#c0c4cc" sw={1.5} /></Page>
                <Page $on>1</Page>
                <Page $ink="#aeb0b4">2</Page>
                <Page>3</Page>
                <Page $ink="#aeb0b4">4</Page>
                <Page $ink="#94969a">5</Page>
                <Page $ink="#a2a4a8">6</Page>
                <Page>
                  <svg width="12" height="4" viewBox="0 0 12 4" fill="#606266"><circle cx="1.800" cy="2" r="1.500" /><circle cx="6" cy="2" r="1.500" /><circle cx="10.200" cy="2" r="1.500" /></svg>
                </Page>
                <Page>94</Page>
                <Page><Chevron d="M4 1.500L8.500 6 4 10.500" c="#606266" sw={1.5} /></Page>
                <Jump><span>前往</span><JumpBox>1</JumpBox><span>页</span></Jump>
              </Pager>
            </Content>
          </Main>
        </Shell>
        <Brushwork />
        <DesktopEdge />
      </Window>
    </>
  );
}
